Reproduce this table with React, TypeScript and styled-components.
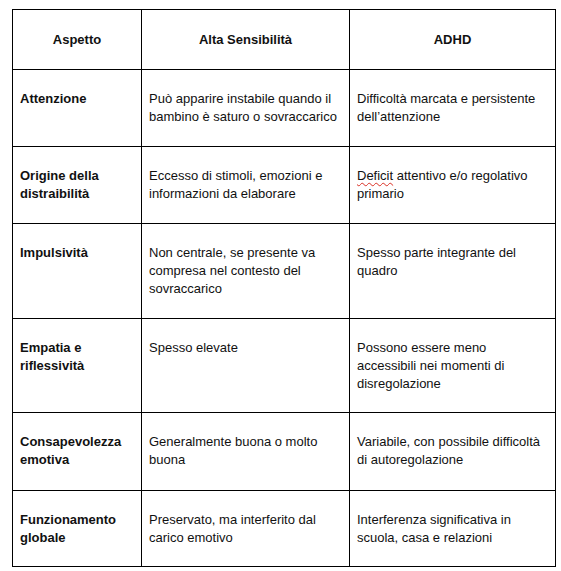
import React from "react";
import styled, { createGlobalStyle } from "styled-components";

const Global = createGlobalStyle`
  html, body { margin: 0; padding: 0; background: #fff; }
  body { font-family: "Liberation Sans", Arial, sans-serif; }
`;

const Page = styled.div`
  padding: 9px 0 0 12px;
`;

const Table = styled.table`
  border-collapse: collapse;
  table-layout: fixed;
  width: 543px;
  font-family: "Liberation Sans", Arial, sans-serif;
  font-size: 13px;
  line-height: 18px;
  color: #111;
`;

const HeadCell = styled.th`
  border: 1px solid #000;
  font-weight: bold;
  text-align: center;
  vertical-align: middle;
  height: 59px;
  padding: 0 7px;
  box-sizing: border-box;
`;

const Cell = styled.td<{ $bold?: boolean }>`
  border: 1px solid #000;
  text-align: left;
  vertical-align: top;
  padding: 20px 7px 0 7px;
  font-weight: ${(p) => (p.$bold ? "bold" : "normal")};
`;

const Row = styled.tr<{ $h: number }>`
  height: ${(p) => p.$h}px;
`;

const Misspelled = styled.span`
  text-decoration: underline wavy #d93025;
  text-decoration-thickness: 1px;
  text-underline-offset: 2px;
  text-decoration-skip-ink: none;
`;

type RowData = { h: number; a: React.ReactNode; b: React.ReactNode; c: React.ReactNode };

const rows: RowData[] = [
  {
    h: 77,
    a: "Attenzione",
    b: "Può apparire instabile quando il bambino è saturo o sovraccarico",
    c: "Difficoltà marcata e persistente dell’attenzione",
  },
  {
    h: 77,
    a: (
      <>
        Origine della
        <br />
        distraibilità
      </>
    ),
    b: "Eccesso di stimoli, emozioni e informazioni da elaborare",
    c: (
      <>
        <Misspelled>Deficit</Misspelled> attentivo e/o regolativo primario
      </>
    ),
  },
  {
    h: 95,
    a: "Impulsività",
    b: "Non centrale, se presente va compresa nel contesto del sovraccarico",
    c: "Spesso parte integrante del quadro",
  },
  {
    h: 94,
    a: (
      <>
        Empatia e
        <br />
        riflessività
      </>
    ),
    b: "Spesso elevate",
    c: "Possono essere meno accessibili nei momenti di disregolazione",
  },
  {
    h: 78,
    a: (
      <>
        Consapevolezza
        <br />
        emotiva
      </>
    ),
    b: "Generalmente buona o molto buona",
    c: "Variabile, con possibile difficoltà di autoregolazione",
  },
  {
    h: 76,
    a: (
      <>
        Funzionamento
        <br />
        globale
      </>
    ),
    b: "Preservato, ma interferito dal carico emotivo",
    c: "Interferenza significativa in scuola, casa e relazioni",
  },
];

export default function App() {
  return (
    <>
      <Global />
      <Page>
        <Table>
          <colgroup>
            <col style={{ width: 129 }} />
            <col style={{ width: 208 }} />
            <col style={{ width: 206 }} />
          </colgroup>
          <thead>
            <Row $h={60}>
              <HeadCell>Aspetto</HeadCell>
              <HeadCell>Alta Sensibilità</HeadCell>
              <HeadCell>ADHD</HeadCell>
            </Row>
          </thead>
          <tbody>
            {rows.map((r, i) => (
              <Row key={i} $h={r.h}>
                <Cell $bold>{r.a}</Cell>
                <Cell>{r.b}</Cell>
                <Cell>{r.c}</Cell>
              </Row>
            ))}
          </tbody>
        </Table>
      </Page>
    </>
  );
}
